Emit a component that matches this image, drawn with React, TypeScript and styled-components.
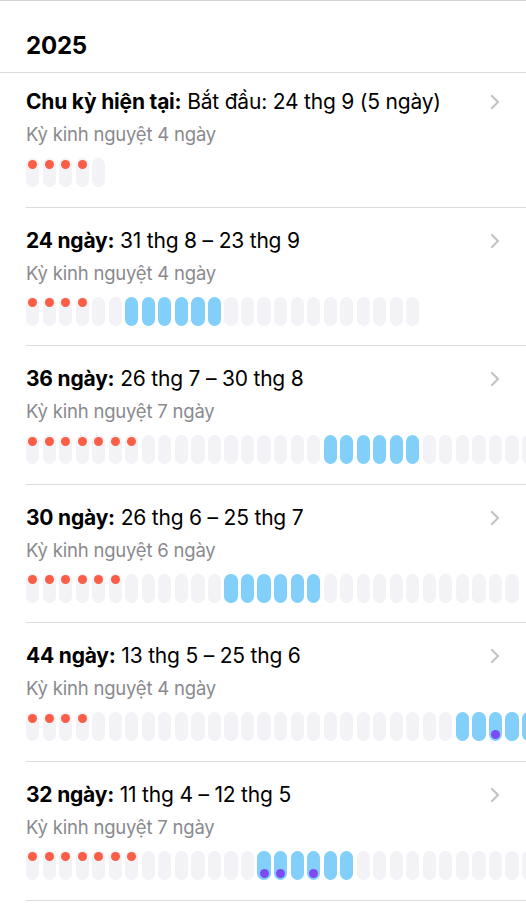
import React from 'react';
import styled, { createGlobalStyle } from 'styled-components';

const GlobalStyle = createGlobalStyle`
  html, body {
    margin: 0;
    padding: 0;
    background: #ffffff;
  }
  body {
    font-family: Inter, "Liberation Sans", sans-serif;
    -webkit-font-smoothing: antialiased;
  }
`;

type Cycle = {
  label: string;
  range: string;
  periodDays: number;
  days: number;
  fertile?: [number, number];
  marks?: number[];
};

const cycles: Cycle[] = [
  { label: 'Chu kỳ hiện tại:', range: 'Bắt đầu: 24 thg 9 (5 ngày)', periodDays: 4, days: 5 },
  { label: '24 ngày:', range: '31 thg 8 – 23 thg 9', periodDays: 4, days: 24, fertile: [6, 11] },
  { label: '36 ngày:', range: '26 thg 7 – 30 thg 8', periodDays: 7, days: 36, fertile: [18, 23] },
  { label: '30 ngày:', range: '26 thg 6 – 25 thg 7', periodDays: 6, days: 30, fertile: [12, 17] },
  { label: '44 ngày:', range: '13 thg 5 – 25 thg 6', periodDays: 4, days: 44, fertile: [26, 31], marks: [28] },
  { label: '32 ngày:', range: '11 thg 4 – 12 thg 5', periodDays: 7, days: 32, fertile: [14, 19], marks: [14, 15, 17] },
];

const Page = styled.div`
  width: 526px;
  min-height: 904px;
  border-top: 1px solid #d1d1d6;
  overflow: hidden;
`;

const YearHeader = styled.div`
  height: 72px;
  display: flex;
  align-items: center;
  padding: 18px 26px 0;
  border-bottom: 1px solid #dcdce0;
  box-sizing: border-box;
`;

const YearTitle = styled.h2`
  margin: 0;
  font-size: 24px;
  font-weight: 700;
  color: #000;
  letter-spacing: -0.2px;
`;

const Row = styled.div<{ $first?: boolean }>`
  margin-left: 26px;
  padding: ${p => (p.$first ? '16px' : '20px')} 0 19.6px;
  border-bottom: 1px solid #dcdce0;
`;

const TitleLine = styled.div`
  display: flex;
  align-items: center;
  justify-content: space-between;
  padding-right: 26px;
`;

const Title = styled.div`
  font-size: 21px;
  line-height: 26px;
  color: #000;
  letter-spacing: -0.2px;
  white-space: nowrap;
`;

const Bold = styled.span`
  font-weight: 700;
`;

const Subtitle = styled.div`
  margin-top: 7px;
  font-size: 18.5px;
  line-height: 24px;
  color: #8a8a8e;
  letter-spacing: -0.2px;
`;

const Chevron = styled.svg`
  flex: none;
  display: block;
`;

const Track = styled.div`
  display: flex;
  gap: 3.35px;
  margin-top: 12px;
  width: max-content;
`;

const Pill = styled.div<{ $fertile?: boolean }>`
  flex: 0 0 13.2px;
  height: 29px;
  box-sizing: border-box;
  padding: 1.5px 2px 2px;
  border-radius: 6.6px;
  display: flex;
  flex-direction: column;
  justify-content: space-between;
  align-items: center;
  background: ${p => (p.$fertile ? '#82cff9' : '#f2f2f7')};
`;

const Dot = styled.span<{ $kind: 'period' | 'mark' | 'none' }>`
  width: 9px;
  height: 9px;
  border-radius: 50%;
  background: ${p => (p.$kind === 'period' ? '#fa5e47' : p.$kind === 'mark' ? '#7c4cf2' : 'transparent')};
`;

const CycleRow: React.FC<{ cycle: Cycle; first?: boolean }> = ({ cycle, first }) => (
  <Row $first={first}>
    <TitleLine>
      <Title>
        <Bold>{cycle.label}</Bold> {cycle.range}
      </Title>
      <Chevron width="10" height="16" viewBox="0 0 10 16">
        <polyline points="2,2 8,8 2,14" fill="none" stroke="#c4c4c7" strokeWidth="2.2" strokeLinecap="round" strokeLinejoin="round" />
      </Chevron>
    </TitleLine>
    <Subtitle>Kỳ kinh nguyệt {cycle.periodDays} ngày</Subtitle>
    <Track>
      {Array.from({ length: cycle.days }).map((_, i) => {
        const fertile = !!cycle.fertile && i >= cycle.fertile[0] && i <= cycle.fertile[1];
        return (
          <Pill key={i} $fertile={fertile}>
            <Dot $kind={i < cycle.periodDays ? 'period' : 'none'} />
            <Dot $kind={cycle.marks?.includes(i) ? 'mark' : 'none'} />
          </Pill>
        );
      })}
    </Track>
  </Row>
);

export default function App() {
  return (
    <>
      <GlobalStyle />
      <Page>
        <YearHeader>
          <YearTitle>2025</YearTitle>
        </YearHeader>
        {cycles.map((c, i) => (
          <CycleRow key={c.label} cycle={c} first={i === 0} />
        ))}
      </Page>
    </>
  );
}
